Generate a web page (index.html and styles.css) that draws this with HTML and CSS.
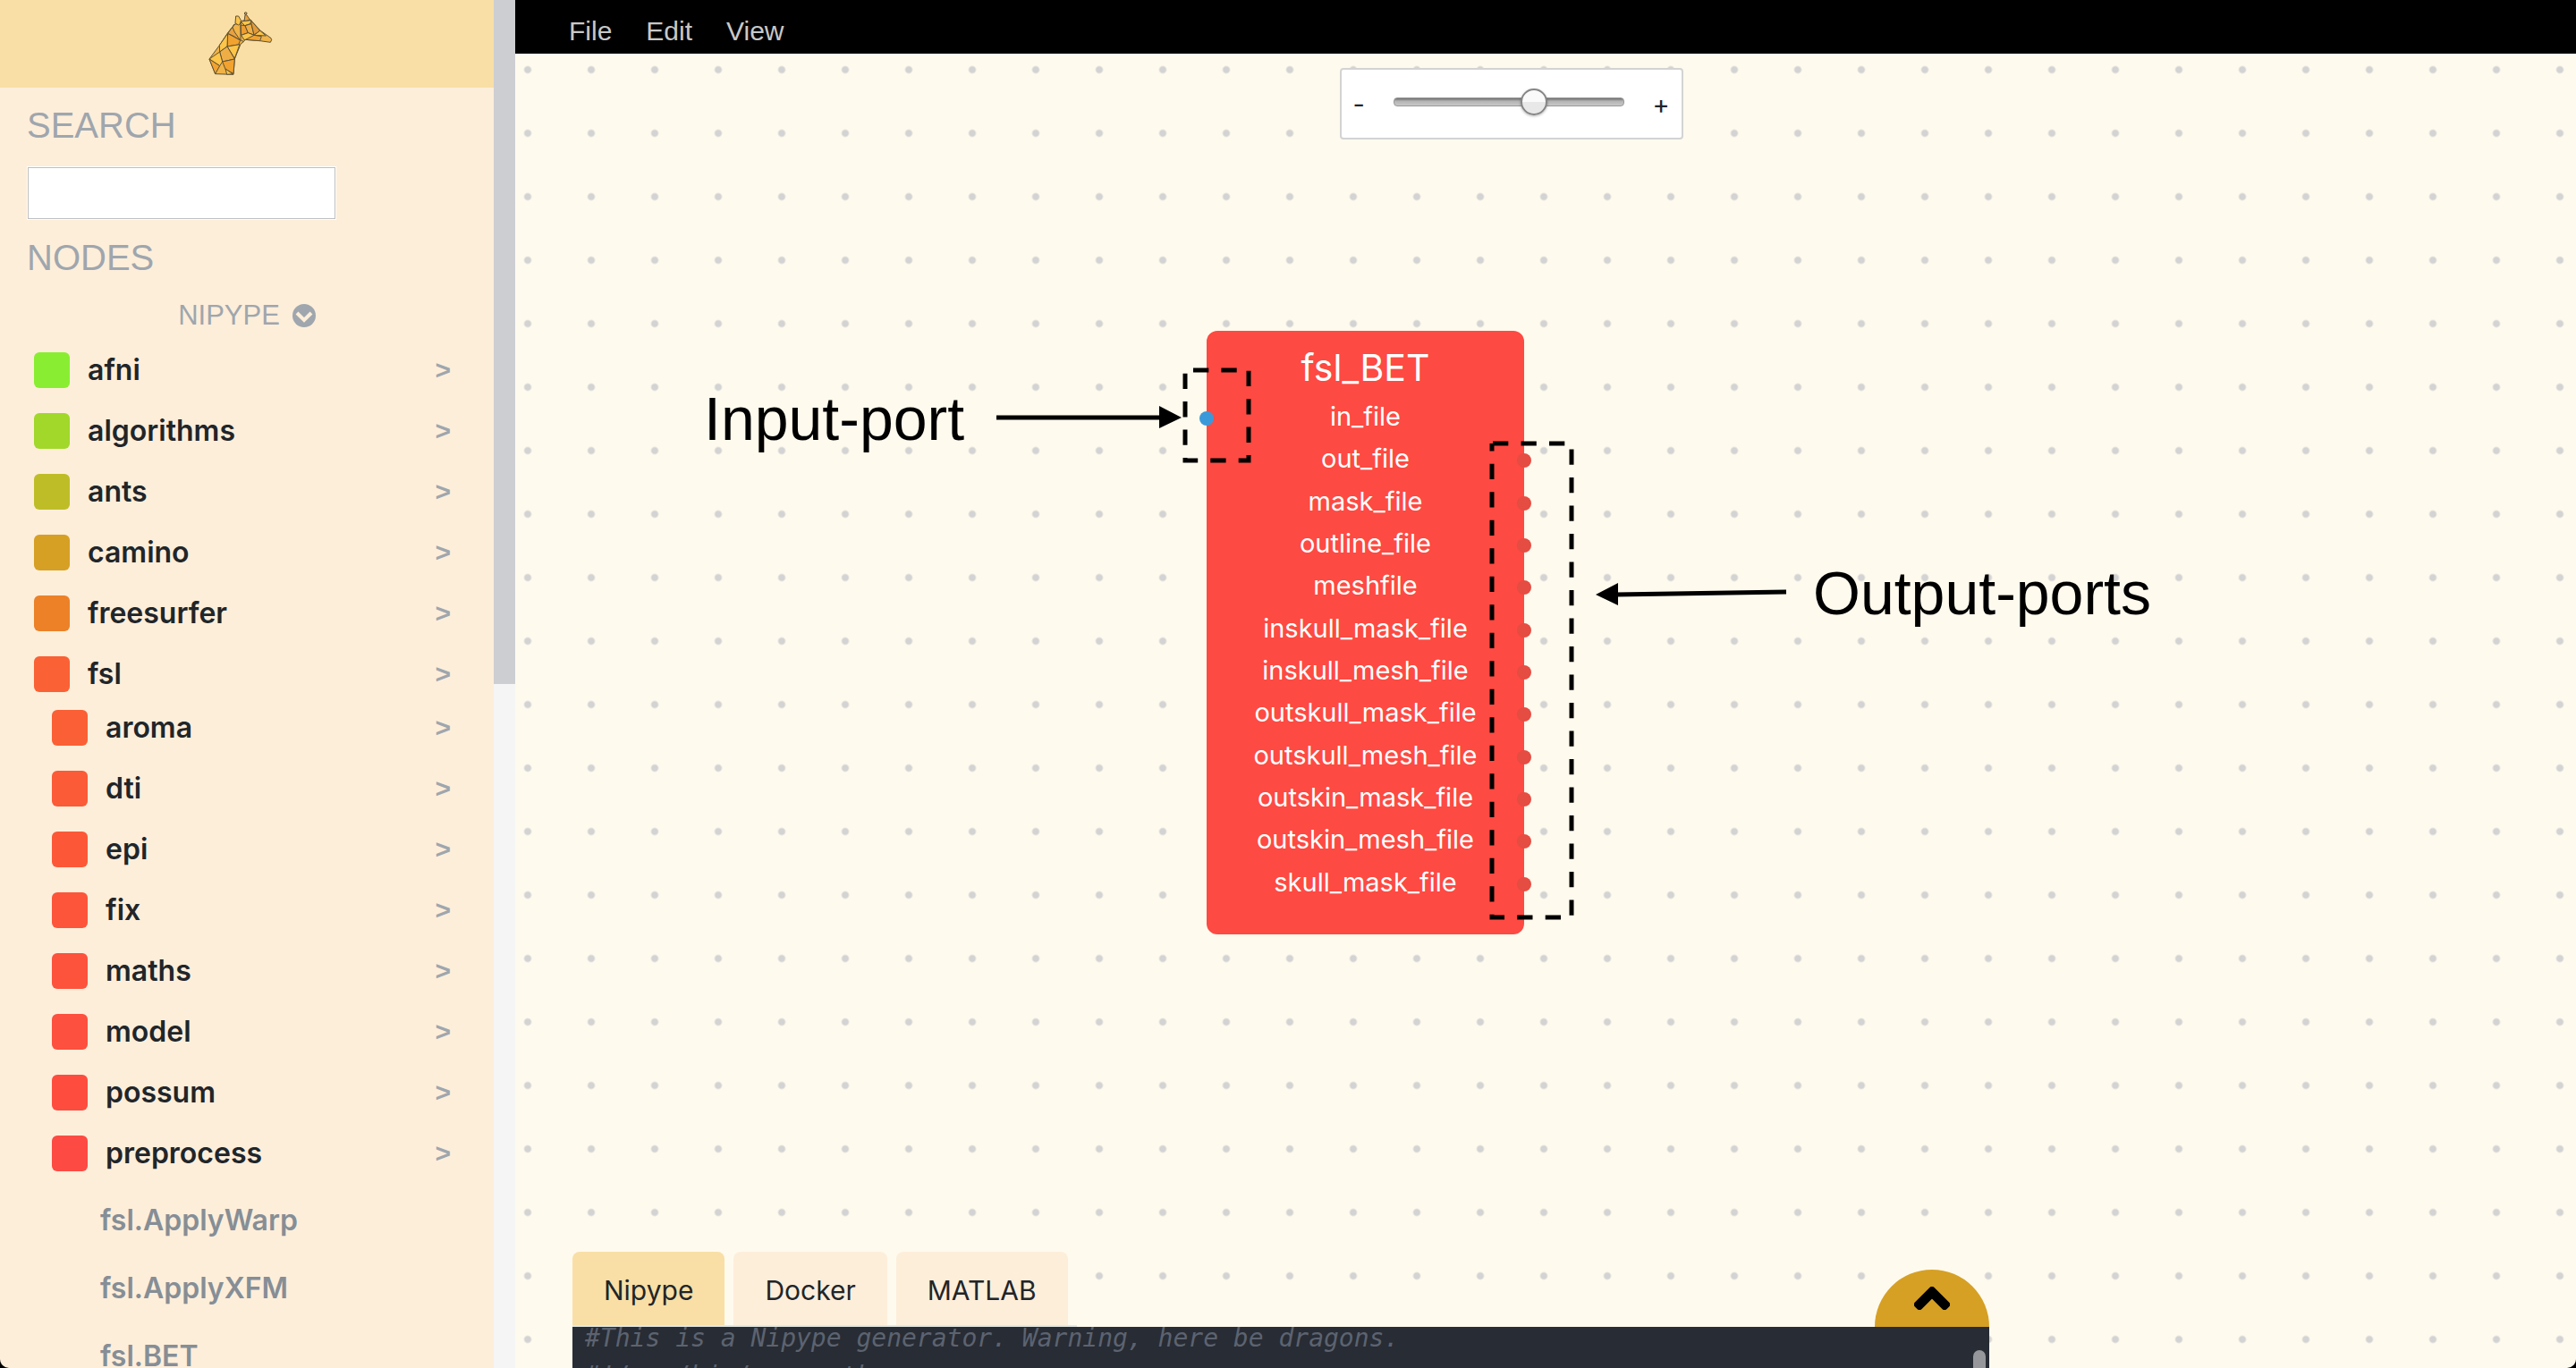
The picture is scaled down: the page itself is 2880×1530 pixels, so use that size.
FILE: index.html
```html
<!DOCTYPE html>
<html lang="en">
<head>
<meta charset="utf-8">
<title>Giraffe editor</title>
<link rel="stylesheet" href="styles.css">
</head>
<body>
<div class="app">
  <aside class="sidebar">
    <div class="sidebar-content">
      <header class="brand">
        <svg class="logo" viewBox="40 36 216 216" role="img" aria-label="Giraffe">
          <g stroke="#5d5136" stroke-width="3" stroke-linejoin="round">
            <path fill="#f0b347" d="M43 198 75 155 105 110 128 81 148 80 152 70 180 66 215 103 250 128 252 134 248 142 213 137 163 133 158 140 148 148 128 198 124 250 63 248Z"/>
            <path fill="#fcc449" d="M132 54 141 54 149 68 148 78 141 84 130 78Z"/>
            <path fill="#e9a03b" d="M163 50 168 50 180 67 160 72Z"/>
            <circle cx="165" cy="45" r="4" fill="#e09a38"/>
            <path fill="#f2a22f" d="M105 112 147 135 141 150 103 156Z"/>
            <path fill="#fdc549" d="M105 112 103 156 78 174 77 152Z"/>
            <path fill="#e8a13e" d="M128 81 105 112 122 120 147 135 128 108 121 92Z"/>
            <path fill="#fdc549" d="M103 156 145 149 128 196Z"/>
            <path fill="#efae45" d="M78 174 103 156 128 198 87 207Z"/>
            <path fill="#fdc549" d="M43 198 78 174 87 207 78 221Z"/>
            <path fill="#f2a22f" d="M43 198 78 221 63 248Z"/>
            <path fill="#f2a22f" d="M87 207 128 198 124 247 97 232Z"/>
            <path fill="#fdc549" d="M97 231 122 248 102 250Z"/>
            <path fill="#fdc549" d="M148 72 184 68 180 80 162 86Z"/>
            <path fill="#ed9d31" d="M148 84 163 86 173 110 150 118Z"/>
            <path fill="#eeae46" d="M163 86 184 80 193 117 173 110Z"/>
            <path fill="#e39a37" d="M184 80 184 70 213 103 193 117Z"/>
            <path fill="#fdc549" d="M213 103 233 120 193 118Z"/>
            <path fill="#fdc549" d="M150 118 173 110 193 118 178 131 160 134Z"/>
            <path fill="#f2a22f" d="M193 118 218 122 213 137 165 133Z"/>
            <path fill="none" d="M148 74V134L158 140"/>
          </g>
        </svg>
      </header>
      <div class="panel">
        <label class="heading" for="search">SEARCH</label>
        <input class="search" id="search" type="text">
        <h2 class="heading">NODES</h2>
        <button class="category" type="button">NIPYPE
          <svg class="category-icon" viewBox="0 0 26 26" aria-hidden="true"><circle cx="13" cy="13" r="13" fill="#9fa6ad"/><path d="M5 10l8 8 8-8" fill="none" stroke="#fdeeda" stroke-width="4"/></svg>
        </button>
        <ul class="tree">
          <li><button class="row" type="button"><i class="swatch afni"></i>afni<b class="more">&gt;</b></button></li>
          <li><button class="row" type="button"><i class="swatch algorithms"></i>algorithms<b class="more">&gt;</b></button></li>
          <li><button class="row" type="button"><i class="swatch ants"></i>ants<b class="more">&gt;</b></button></li>
          <li><button class="row" type="button"><i class="swatch camino"></i>camino<b class="more">&gt;</b></button></li>
          <li><button class="row" type="button"><i class="swatch freesurfer"></i>freesurfer<b class="more">&gt;</b></button></li>
          <li><button class="row" type="button"><i class="swatch fsl"></i>fsl<b class="more">&gt;</b></button>
            <ul class="tree subtree">
              <li><button class="row" type="button"><i class="swatch aroma"></i>aroma<b class="more">&gt;</b></button></li>
              <li><button class="row" type="button"><i class="swatch dti"></i>dti<b class="more">&gt;</b></button></li>
              <li><button class="row" type="button"><i class="swatch epi"></i>epi<b class="more">&gt;</b></button></li>
              <li><button class="row" type="button"><i class="swatch fix"></i>fix<b class="more">&gt;</b></button></li>
              <li><button class="row" type="button"><i class="swatch maths"></i>maths<b class="more">&gt;</b></button></li>
              <li><button class="row" type="button"><i class="swatch model"></i>model<b class="more">&gt;</b></button></li>
              <li><button class="row" type="button"><i class="swatch possum"></i>possum<b class="more">&gt;</b></button></li>
              <li><button class="row" type="button"><i class="swatch preprocess"></i>preprocess<b class="more">&gt;</b></button>
                <ul class="leaves">
                  <li><button class="row leaf" type="button">fsl.ApplyWarp</button></li>
                  <li><button class="row leaf" type="button">fsl.ApplyXFM</button></li>
                  <li><button class="row leaf" type="button">fsl.BET</button></li>
                </ul>
              </li>
            </ul>
          </li>
        </ul>
      </div>
    </div>
    <div class="scrollbar"><div class="scroll-thumb"></div></div>
  </aside>

  <main class="workspace">
    <nav class="menubar">
      <button class="menu" type="button">File</button>
      <button class="menu" type="button">Edit</button>
      <button class="menu" type="button">View</button>
    </nav>
    <section class="canvas">
      <div class="zoom">
        <span>-</span>
        <input class="zoom-range" type="range" min="0" max="1000" value="624" aria-label="Zoom">
        <span>+</span>
      </div>

      <article class="node">
        <h3 class="node-title">fsl_BET</h3>
        <ul class="ports">
          <li class="port in">in_file</li>
          <li class="port out">out_file</li>
          <li class="port out">mask_file</li>
          <li class="port out">outline_file</li>
          <li class="port out">meshfile</li>
          <li class="port out">inskull_mask_file</li>
          <li class="port out">inskull_mesh_file</li>
          <li class="port out">outskull_mask_file</li>
          <li class="port out">outskull_mesh_file</li>
          <li class="port out">outskin_mask_file</li>
          <li class="port out">outskin_mesh_file</li>
          <li class="port out">skull_mask_file</li>
        </ul>
      </article>

      <svg class="marks" viewBox="576 60 1900 1000" aria-hidden="true">
        <g fill="none" stroke="#000" stroke-width="5">
          <path stroke-dasharray="17.3 14.1" stroke-dashoffset="-9" d="M1325 414H1396V515H1325Z"/>
          <path stroke-dasharray="17.3 14.2" stroke-dashoffset="-1" d="M1668 496H1757V1026H1668Z"/>
          <path d="M1114 467H1300M1997 662 1806 665"/>
        </g>
        <path d="M1321 467 1296 454V479ZM1784 665 1809 652V677Z"/>
      </svg>
      <p class="note input-note">Input-port</p>
      <p class="note output-note">Output-ports</p>

      <div class="code-panel">
        <div class="panel-head">
          <div class="tabs" role="tablist">
            <button class="tab active" type="button" role="tab">Nipype</button>
            <button class="tab" type="button" role="tab">Docker</button>
            <button class="tab" type="button" role="tab">MATLAB</button>
          </div>
          <button class="expand" type="button" aria-label="Expand code">
            <svg class="expand-icon" viewBox="0 0 40 26" aria-hidden="true"><path d="M4 20 20 4 36 20 34 22 20 8 6 22Z" stroke="#000" stroke-width="8" stroke-linejoin="round"/></svg>
          </button>
        </div>
        <div class="editor">
          <pre class="code">#This is a Nipype generator. Warning, here be dragons.
#!/usr/bin/env python</pre>
          <div class="editor-thumb"></div>
        </div>
      </div>
    </section>
  </main>
</div>
</body>
</html>
```
FILE: styles.css
```css
* { box-sizing: border-box; }

html { background: #000; }

body {
  margin: 0;
  color: #212529;
  font-family: Inter, "Liberation Sans", sans-serif;
}

button {
  margin: 0;
  padding: 0;
  border: 0;
  background: none;
  color: inherit;
  font: inherit;
}

ul { margin: 0; padding: 0; list-style: none; }

.app {
  display: flex;
  height: 100vh;
  overflow: hidden;
  border-radius: 0 0 10px 10px;
}

/* Sidebar */

.sidebar {
  display: flex;
  flex: none;
  width: 20%;
  background: #fdeeda;
  overflow: hidden;
}

.sidebar-content { flex: 1; overflow: hidden; }

.scrollbar { width: 24px; background: #f5f5f5; }

.scroll-thumb { height: 50%; background: #cdced2; }

.brand {
  display: flex;
  justify-content: center;
  height: 98px;
  padding-top: 12px;
  background: #f9dfa5;
}

.logo { width: 72px; height: 72px; margin-left: -14px; }

.panel { display: flex; flex-direction: column; align-items: stretch; padding: 18px 48px 0 30px; }

.heading {
  margin: 0;
  color: #9fa6ad;
  font: 400 40px/48px "Liberation Sans", sans-serif;
}

.search {
  width: 346px;
  height: 60px;
  margin: 22px 0 18px;
  padding: 0 12px;
  border: 1px solid #fff;
  outline: 1px solid #bcbfc2;
  outline-offset: -2px;
  background: #fff;
  font-size: 30px;
}

.category {
  display: flex;
  justify-content: center;
  align-items: center;
  gap: 14px;
  margin: 23px 0 23px 18px;
  color: #9fa6ad;
  font: 400 31px/36px "Liberation Sans", sans-serif;
}

.category-icon { width: 26px; height: 26px; }

.tree { display: flex; flex-direction: column; gap: 28px; padding-left: 8px; }

.subtree { margin-top: 20px; padding-left: 20px; }

.row {
  display: flex;
  align-items: center;
  width: 100%;
  height: 40px;
  font-size: 32px;
  font-weight: 600;
  line-height: 38px;
}

.swatch { width: 40px; height: 40px; margin-right: 20px; border-radius: 6px; }

.more { margin-left: auto; color: #9fa6ad; font: 700 30px/40px "Liberation Sans", sans-serif; }

.afni { background: #89ee31; }
.algorithms { background: #a1d82a; }
.ants { background: #bfbd27; }
.camino { background: #d6a024; }
.freesurfer { background: #ec8128; }
.fsl { background: #fa6134; }
.aroma { background: #fb5f35; }
.dti { background: #fb5b36; }
.epi { background: #fc5838; }
.fix { background: #fc553a; }
.maths { background: #fd523c; }
.model { background: #fd503e; }
.possum { background: #fe4d3f; }
.preprocess { background: #fd4a42; }

.leaves { display: flex; flex-direction: column; gap: 36px; margin-top: 35px; padding-left: 54px; }

.leaf { color: #868e96; }

/* Workspace */

.workspace { display: flex; flex: 1; flex-direction: column; min-width: 0; }

.menubar {
  display: flex;
  align-items: center;
  gap: 38px;
  height: 60px;
  padding: 10px 60px 0;
  background: #000;
}

.menu { color: #c8c8c8; font: 400 30px/40px "Liberation Sans", sans-serif; }

.canvas {
  position: relative;
  flex: 1;
  overflow: hidden;
  background-color: #fffaee;
  background-image: radial-gradient(circle at 14px 18px, #d3d3d3 3px, transparent 5px);
  background-size: 71px 71px;
}

.zoom {
  position: absolute;
  top: 16px;
  left: 40%;
  display: flex;
  justify-content: space-between;
  align-items: center;
  width: 384px;
  height: 80px;
  padding: 0 13px;
  border: 2px solid #d3d3d3;
  border-radius: 4px;
  background: #fff;
  font-size: 29px;
}

.zoom-range {
  width: 258px;
  height: 30px;
  margin: 0 0 4px;
  appearance: none;
  background: none;
}

.zoom-range::-webkit-slider-runnable-track {
  height: 10px;
  border: 1px solid #999;
  border-radius: 4px;
  background: linear-gradient(#6f6f6f, #b4b4b4 40%, #c8c8c8);
}

.zoom-range::-webkit-slider-thumb {
  width: 30px;
  height: 30px;
  margin-top: -11px;
  appearance: none;
  border: 2px solid #858585;
  border-radius: 50%;
  background: linear-gradient(#fafafa 50%, #e8e8e8 50%);
  box-shadow: 0 1px 3px rgba(0, 0, 0, 0.3);
}

.node {
  position: absolute;
  top: 310px;
  left: 773px;
  width: 355px;
  padding: 11px 0 33px;
  border-radius: 12px;
  background: #fd4a42;
  color: #fff;
  text-align: center;
}

.node-title { margin: 0 0 3px; font-size: 41px; font-weight: 400; line-height: 60px; }

.ports { display: grid; grid-auto-rows: 1fr; height: 568px; }

.port { position: relative; font-size: 29px; line-height: 44px; }

.port::after {
  position: absolute;
  top: 16px;
  width: 16px;
  height: 16px;
  border-radius: 50%;
  content: "";
}

.in::after { left: -8px; background: #3b99da; }

.out::after { right: -8px; background: #e54c42; }

.marks { position: absolute; top: 0; left: 0; width: 1900px; height: 1000px; }

.note { position: absolute; margin: 0; color: #000; font: 400 68px/80px "Liberation Sans", sans-serif; }

.input-note { top: 368px; left: 211px; }

.output-note { top: 563px; left: 1451px; }

/* Generated code */

.code-panel { position: absolute; bottom: 0; left: 64px; width: 1584px; }

.panel-head { display: flex; justify-content: space-between; align-items: flex-end; }

.tabs { display: flex; gap: 10px; padding-right: 10px; border-bottom: 2px solid #e3e8e4; }

.tab {
  height: 82px;
  padding: 3px 35px 0;
  border-radius: 8px 8px 0 0;
  background: #fdeeda;
  font-size: 30px;
}

.active { background: #f9dfa5; }

.expand {
  display: flex;
  justify-content: center;
  width: 128px;
  height: 64px;
  padding-top: 19px;
  border-radius: 64px 64px 0 0;
  background: #d6a024;
}

.expand-icon { width: 40px; height: 26px; }

.editor { position: relative; height: 46px; overflow: hidden; background: #282c34; }

.code {
  margin: -8px 0 0;
  padding-left: 14px;
  color: #5c6370;
  font: italic 28px/42px "DejaVu Sans Mono", monospace;
}

.editor-thumb {
  position: absolute;
  top: 26px;
  right: 4px;
  width: 14px;
  height: 60px;
  border-radius: 7px;
  background: #96979b;
}
```
